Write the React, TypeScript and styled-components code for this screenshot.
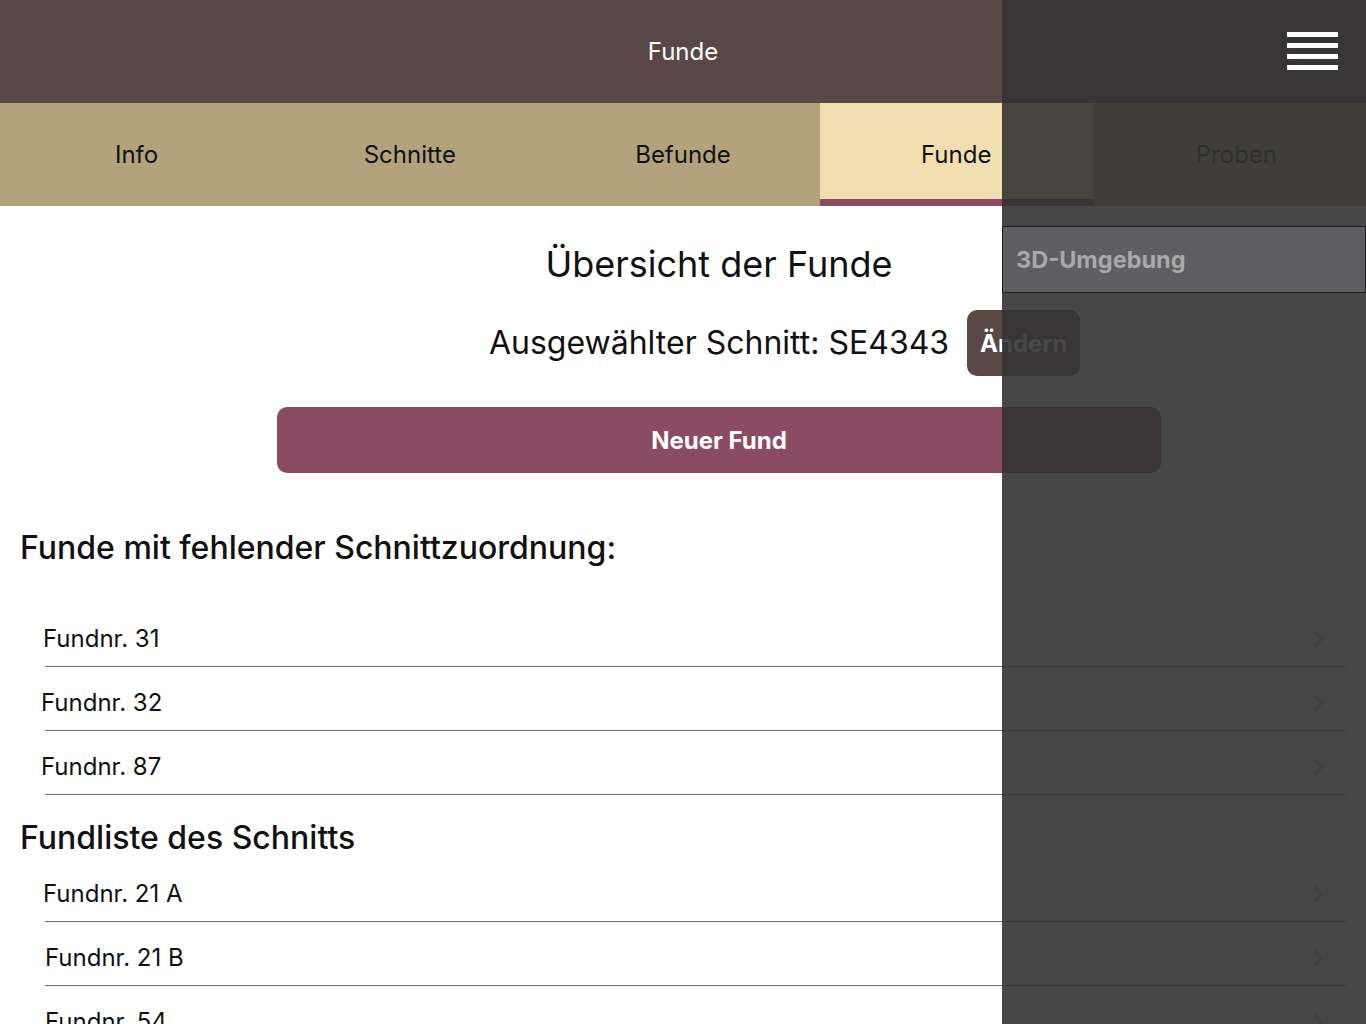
import React from "react";
import styled, { createGlobalStyle } from "styled-components";

const GlobalStyle = createGlobalStyle`
  html, body { margin: 0; padding: 0; background: #fff; }
  body { font-family: Inter, "Noto Sans", "Liberation Sans", sans-serif; color: #111; }
  * { box-sizing: border-box; }
`;

const Screen = styled.div`
  position: relative;
  width: 1366px;
  height: 1024px;
  overflow: hidden;
  background: #fff;
`;

const Header = styled.header`
  height: 103px;
  background: #5a4846;
  display: flex;
  align-items: center;
  justify-content: center;
  color: #fff;
  font-size: 24px;
`;

const Tabs = styled.nav`
  display: grid;
  grid-template-columns: repeat(5, 1fr);
  height: 103px;
  background: #b3a27c;
`;

const Tab = styled.div<{ $active?: boolean; $shift?: number }>`
  display: flex;
  align-items: center;
  justify-content: center;
  padding-left: ${(p) => p.$shift ?? 0}px;
  font-size: 24px;
  color: #111;
  background: ${(p) => (p.$active ? "#f1dfb1" : "transparent")};
  box-shadow: ${(p) => (p.$active ? "inset 0 -7px 0 #8b4b62" : "none")};
`;

const Overview = styled.section`
  padding-left: 72px;
  display: flex;
  flex-direction: column;
  align-items: center;
`;

const Title = styled.h1`
  margin: 38px 0 0;
  font-size: 36px;
  line-height: 40px;
  font-weight: 400;
  color: #111;
`;

const SchnittRow = styled.div`
  margin-top: 26px;
  width: 100%;
  display: grid;
  grid-template-columns: 1fr auto 1fr;
  align-items: center;
  column-gap: 18px;
`;

const SchnittLabel = styled.div`
  grid-column: 2;
  font-size: 32px;
  line-height: 40px;
  color: #111;
`;

const SmallButton = styled.button`
  grid-column: 3;
  justify-self: start;
  height: 66px;
  padding: 0 13px;
  border: none;
  border-radius: 10px;
  background: #5a4846;
  color: #fff;
  font-family: inherit;
  font-size: 24px;
  font-weight: 700;
`;

const WideButton = styled.button`
  margin-top: 31px;
  width: 884px;
  height: 66px;
  border: none;
  border-radius: 10px;
  background: #8b4b62;
  color: #fff;
  font-family: inherit;
  font-size: 24px;
  font-weight: 700;
`;

const Section = styled.section`
  padding: 0 20px;
`;

const SectionTitle = styled.h2<{ $top: number }>`
  margin: ${(p) => p.$top}px 0 0 0;
  font-size: 32px;
  line-height: 36px;
  font-weight: 500;
  color: #111;
`;

const List = styled.ul<{ $top: number }>`
  list-style: none;
  margin: ${(p) => p.$top}px 0 0 0;
  padding: 0;
`;

const Row = styled.li`
  margin-left: 25px;
  height: 64px;
  padding-top: 8px;
  padding-right: 22px;
  border-bottom: 1px solid #6f6f6f;
  display: flex;
  align-items: center;
  justify-content: space-between;
  font-size: 24px;
  color: #111;
`;

const RowLabel = styled.span<{ $indent: number }>`
  margin-left: ${(p) => p.$indent}px;
`;

const Panel = styled.aside`
  position: absolute;
  top: 0;
  right: 0;
  width: 364px;
  height: 100%;
  background: rgba(51, 51, 51, 0.9);
  display: flex;
  flex-direction: column;
`;

const PanelTop = styled.div`
  height: 103px;
  display: flex;
  align-items: center;
  justify-content: flex-end;
  padding-right: 28px;
`;

const MenuItem = styled.div`
  margin-top: 123px;
  height: 67px;
  border: 1px solid #1c1c1c;
  background: #5f5e63;
  color: #a9a9a9;
  font-size: 23.5px;
  font-weight: 700;
  display: flex;
  align-items: center;
  padding-left: 13px;
`;

const Chevron = () => (
  <svg width="12" height="20" viewBox="0 0 12 20">
    <path d="M2 2 L10 10 L2 18" fill="none" stroke="#c4c4c8" strokeWidth="3" />
  </svg>
);

const Hamburger = () => (
  <svg width="51" height="39" viewBox="0 0 51 39">
    <rect x="0" y="0" width="51" height="5" fill="#fff" />
    <rect x="0" y="11" width="51" height="5" fill="#fff" />
    <rect x="0" y="22" width="51" height="5" fill="#fff" />
    <rect x="0" y="33" width="51" height="5" fill="#fff" />
  </svg>
);

const missing = [
  { label: "Fundnr. 31", indent: -2 },
  { label: "Fundnr. 32", indent: -4 },
  { label: "Fundnr. 87", indent: -4 },
];
const assigned = [
  { label: "Fundnr. 21 A", indent: -2 },
  { label: "Fundnr. 21 B", indent: 0 },
  { label: "Fundnr. 54", indent: 0 },
];

export default function App() {
  return (
    <Screen>
      <GlobalStyle />
      <Header>Funde</Header>
      <Tabs>
        <Tab>Info</Tab>
        <Tab>Schnitte</Tab>
        <Tab>Befunde</Tab>
        <Tab $active>Funde</Tab>
        <Tab $shift={14}>Proben</Tab>
      </Tabs>
      <Overview>
        <Title>Übersicht der Funde</Title>
        <SchnittRow>
          <SchnittLabel>Ausgewählter Schnitt: SE4343</SchnittLabel>
          <SmallButton>Ändern</SmallButton>
        </SchnittRow>
        <WideButton>Neuer Fund</WideButton>
      </Overview>
      <Section>
        <SectionTitle $top={57}>Funde mit fehlender Schnittzuordnung:</SectionTitle>
        <List $top={37}>
          {missing.map((r) => (
            <Row key={r.label}>
              <RowLabel $indent={r.indent}>{r.label}</RowLabel>
              <Chevron />
            </Row>
          ))}
        </List>
        <SectionTitle $top={25}>Fundliste des Schnitts</SectionTitle>
        <List $top={2}>
          {assigned.map((r) => (
            <Row key={r.label}>
              <RowLabel $indent={r.indent}>{r.label}</RowLabel>
              <Chevron />
            </Row>
          ))}
        </List>
      </Section>
      <Panel>
        <PanelTop>
          <Hamburger />
        </PanelTop>
        <MenuItem>3D-Umgebung</MenuItem>
      </Panel>
    </Screen>
  );
}
